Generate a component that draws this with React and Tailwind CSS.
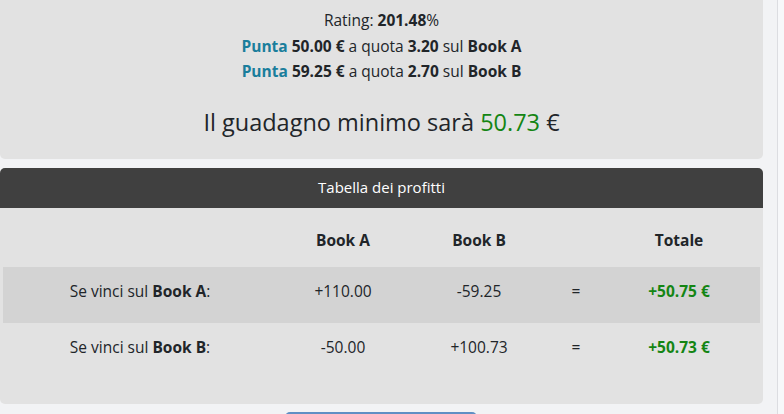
import React from 'react';

const rows = [
    { label: 'Book A', a: '+110.00', b: '-59.25', total: '+50.75 €', shaded: true },
    { label: 'Book B', a: '-50.00', b: '+100.73', total: '+50.73 €', shaded: false },
];

const App = () => {
    return (
        <div className="flex h-[414px] w-[784px] overflow-hidden bg-[#f2f3f5] text-[#212529] font-['Open_Sans','Liberation_Sans',sans-serif]">
            <div className="w-[777px] pr-[14px]">
                {/* Summary card */}
                <div className="bg-[#e2e2e2] rounded-b-[5px] pt-[8px] pb-[21px] text-center">
                    <div className="text-[15.5px] leading-[25.5px]">
                        <p>Rating: <b>201.48</b>%</p>
                        <p>
                            <b className="text-[#1a7e9c]">Punta</b> <b>50.00 €</b> a quota <b>3.20</b> sul <b>Book A</b>
                        </p>
                        <p>
                            <b className="text-[#1a7e9c]">Punta</b> <b>59.25 €</b> a quota <b>2.70</b> sul <b>Book B</b>
                        </p>
                    </div>
                    <h2 className="mt-[21px] text-[23.5px] leading-[32px] font-medium">
                        Il guadagno minimo sarà <span className="text-[#148514]">50.73</span> €
                    </h2>
                </div>

                {/* Profit table */}
                <div className="mt-[9px] bg-[#e2e2e2] rounded-[5px] overflow-hidden">
                    <div className="h-[40px] bg-[#404040] text-white text-[15px] flex items-center justify-center">
                        Tabella dei profitti
                    </div>
                    <div className="px-[3px] pt-[9px] pb-[25px] text-[15.5px]">
                        <div className="grid grid-cols-[274px_132px_140px_54px_152px] h-[50px] items-center text-center font-bold pb-[2px]">
                            <div></div>
                            <div>Book A</div>
                            <div>Book B</div>
                            <div></div>
                            <div>Totale</div>
                        </div>
                        {rows.map((row) => (
                            <div
                                key={row.label}
                                className={`grid grid-cols-[274px_132px_140px_54px_152px] h-[56px] items-center text-center pb-[5px] ${row.shaded ? 'bg-[#d3d3d3]' : ''}`}
                            >
                                <div>Se vinci sul <b>{row.label}</b>:</div>
                                <div>{row.a}</div>
                                <div>{row.b}</div>
                                <div>=</div>
                                <div className="font-bold text-[#148514]">{row.total}</div>
                            </div>
                        ))}
                    </div>
                </div>

                <div className="mt-[8px] flex justify-center">
                    <div className="ml-[-1px] w-[192px] h-[10px] bg-[#5f8fc4] rounded-t-[5px]"></div>
                </div>
            </div>
            {/* scrollbar strip */}
            <div className="w-[7px] bg-[#f7f8fa] border-l border-[#dcdde1]"></div>
        </div>
    );
};

export default App;
